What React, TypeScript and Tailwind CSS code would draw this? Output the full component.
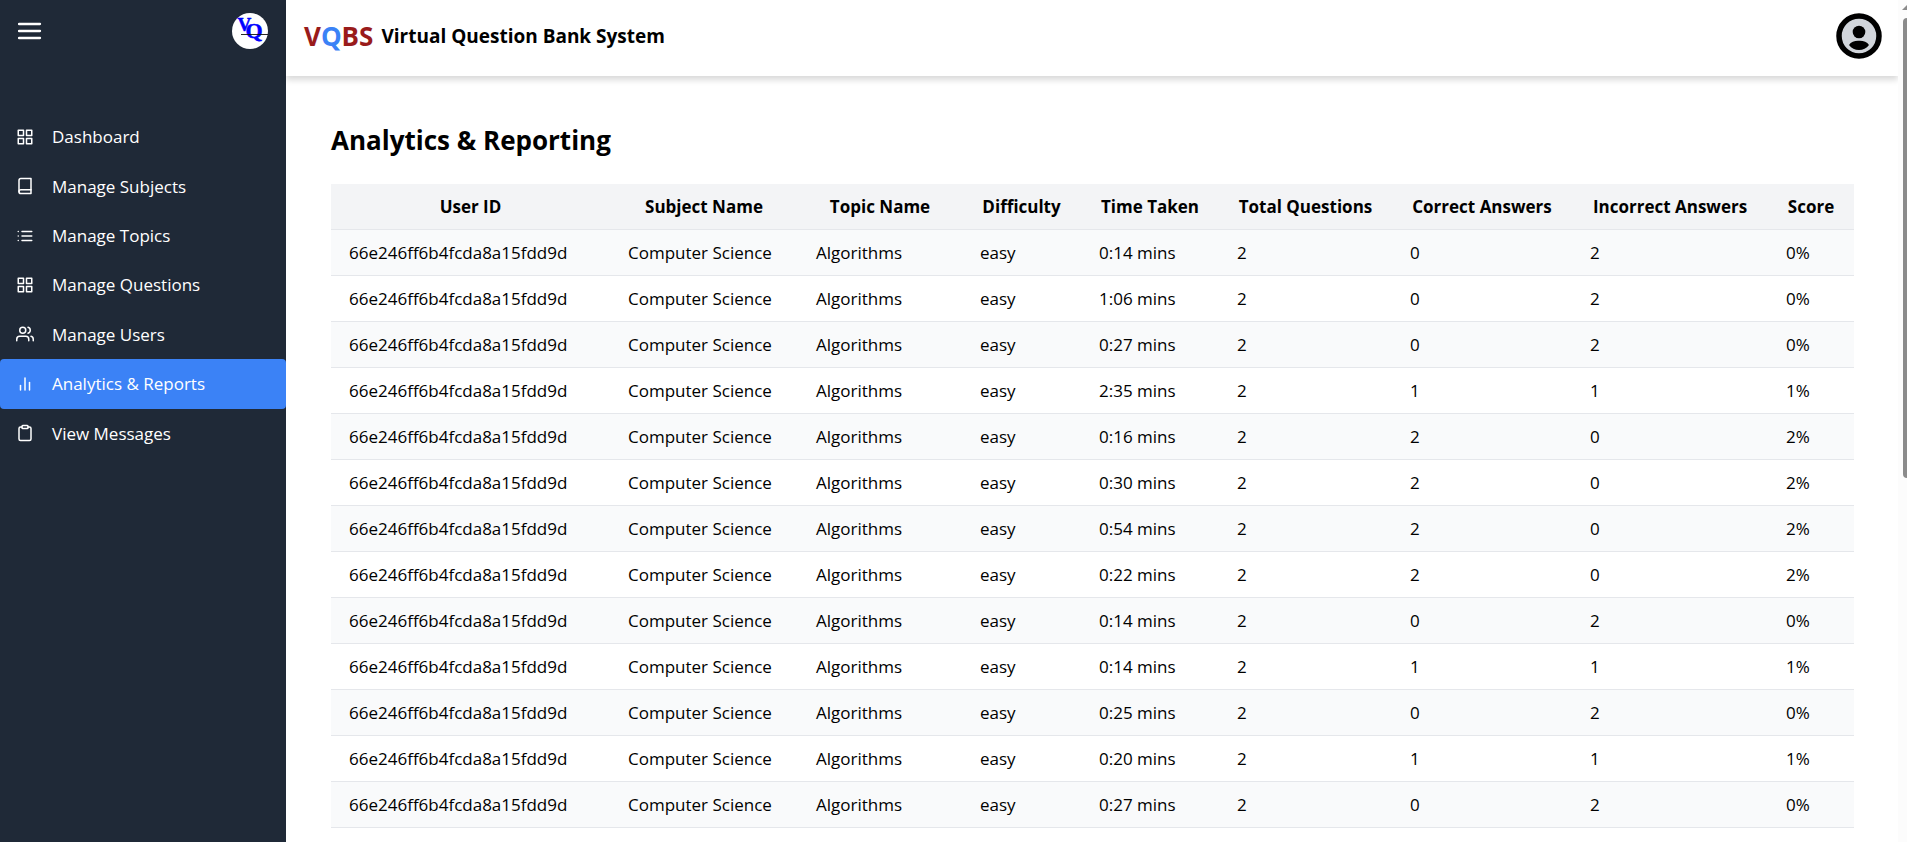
import { useState } from "react";
import type { IconType } from "react-icons";
import {
  FiBarChart2,
  FiBook,
  FiClipboard,
  FiGrid,
  FiList,
  FiUsers,
} from "react-icons/fi";

const navItems: { label: string; icon: IconType }[] = [
  { label: "Dashboard", icon: FiGrid },
  { label: "Manage Subjects", icon: FiBook },
  { label: "Manage Topics", icon: FiList },
  { label: "Manage Questions", icon: FiGrid },
  { label: "Manage Users", icon: FiUsers },
  { label: "Analytics & Reports", icon: FiBarChart2 },
  { label: "View Messages", icon: FiClipboard },
];

const columns = [
  { title: "User ID", width: "w-[279px]" },
  { title: "Subject Name", width: "w-[188px]" },
  { title: "Topic Name", width: "w-[164px]" },
  { title: "Difficulty", width: "w-[119px]" },
  { title: "Time Taken", width: "w-[138px]" },
  { title: "Total Questions", width: "w-[173px]" },
  { title: "Correct Answers", width: "w-[180px]" },
  { title: "Incorrect Answers", width: "w-[196px]" },
  { title: "Score", width: "w-[86px]" },
];

const attempts = [
  { time: "0:14", correct: 0 },
  { time: "1:06", correct: 0 },
  { time: "0:27", correct: 0 },
  { time: "2:35", correct: 1 },
  { time: "0:16", correct: 2 },
  { time: "0:30", correct: 2 },
  { time: "0:54", correct: 2 },
  { time: "0:22", correct: 2 },
  { time: "0:14", correct: 0 },
  { time: "0:14", correct: 1 },
  { time: "0:25", correct: 0 },
  { time: "0:20", correct: 1 },
  { time: "0:27", correct: 0 },
];

function Logo() {
  return (
    <svg viewBox="0 0 36 36" className="size-9" role="img" aria-label="VQ logo">
      <circle cx="18" cy="18" r="18" fill="#fff" />
      <g
        fill="#0000ff"
        stroke="#0000ff"
        strokeWidth="0.5"
        fontFamily="Liberation Serif, serif"
        fontWeight="700"
      >
        <text x="5.5" y="18" fontSize="19">V</text>
        <text x="13.5" y="25" fontSize="22">Q</text>
      </g>
      <path d="M9 21.5H36" stroke="#111" strokeWidth="0.9" />
    </svg>
  );
}

function Sidebar() {
  const [active, setActive] = useState("Analytics & Reports");
  return (
    <aside className="flex w-[286px] shrink-0 flex-col bg-[#1f2937] text-white">
      <div className="flex h-[112px] items-start justify-between pt-[13px] pr-[18px] pl-[18px]">
        <button type="button" aria-label="Toggle menu" className="flex h-9 items-center">
          <svg viewBox="0 0 24 18" className="h-[18px] w-6" fill="none" stroke="currentColor" strokeWidth="2.3" strokeLinecap="round">
            <path d="M1 2H22M1 9H22M1 16H22" />
          </svg>
        </button>
        <Logo />
      </div>
      <nav className="grid h-[346px] grid-cols-1 grid-rows-7">
        {navItems.map(({ label, icon: Icon }) => (
          <a
            key={label}
            href="#"
            onClick={() => setActive(label)}
            className={
              label === active
                ? "flex items-center gap-[18px] rounded-[4px] bg-[#3b82f6] pl-4"
                : "flex items-center gap-[18px] pl-4"
            }
          >
            <Icon className="size-[18px]" />
            <span>{label}</span>
          </a>
        ))}
      </nav>
    </aside>
  );
}

function Header() {
  return (
    <header className="flex h-[76px] items-center justify-between bg-white pr-4 pb-1 pl-[18px] shadow-[0_4px_6px_rgba(0,0,0,0.15)]">
      <div className="flex items-center gap-2 font-bold">
        <span className="text-[26px] text-[#991b1b]">
          V<span className="text-[#3b82f6]">Q</span>BS
        </span>
        <span className="text-[19px]">Virtual Question Bank System</span>
      </div>
      <button type="button" aria-label="Account">
        <svg viewBox="0 0 46 46" className="size-[46px]">
          <circle cx="23" cy="23" r="20" fill="#d1d5db" stroke="#000" strokeWidth="5.5" />
          <circle cx="23" cy="19" r="6.3" />
          <path d="M13 32c2-3.500 6-4.500 10-4.300 4-.2 8 .8 10 4.300-2.500 3.200-6 5-10 5s-7.500-1.800-10-5Z" />
        </svg>
      </button>
    </header>
  );
}

export default function App() {
  return (
    <div className="flex h-screen overflow-hidden bg-white font-['Open_Sans','Noto_Sans',sans-serif] text-[17px] leading-[27px] text-black">
      <Sidebar />
      <div className="flex min-w-0 flex-1 flex-col">
        <Header />
        <main className="flex-1 overflow-hidden px-[45px] pt-[46px]">
          <h1 className="mb-[26px] text-[26px] leading-9 font-bold">Analytics &amp; Reporting</h1>
          <table className="w-full table-fixed border-collapse">
            <colgroup>
              {columns.map((c) => (
                <col key={c.title} className={c.width} />
              ))}
            </colgroup>
            <thead>
              <tr className="h-[45px] border-b border-[#e5e7eb] bg-[#f3f4f6]">
                {columns.map((c) => (
                  <th key={c.title} scope="col" className="whitespace-nowrap">
                    {c.title}
                  </th>
                ))}
              </tr>
            </thead>
            <tbody>
              {attempts.map(({ time, correct }, i) => (
                <tr key={i} className="h-[46px] border-b border-[#e5e7eb] odd:bg-[#f9fafb]">
                  <td className="pl-[18px]">66e246ff6b4fcda8a15fdd9d</td>
                  <td className="pl-[18px]">Computer Science</td>
                  <td className="pl-[18px]">Algorithms</td>
                  <td className="pl-[18px]">easy</td>
                  <td className="pl-[18px]">{time} mins</td>
                  <td className="pl-[18px]">2</td>
                  <td className="pl-[18px]">{correct}</td>
                  <td className="pl-[18px]">{2 - correct}</td>
                  <td className="pl-[18px]">{correct}%</td>
                </tr>
              ))}
            </tbody>
          </table>
        </main>
      </div>
      <div aria-hidden="true" className="flex w-[9px] shrink-0 flex-col items-end bg-[#fcfcfc] pt-[5px]">
        <svg viewBox="0 0 5 5" className="size-[5px]">
          <path d="M0 5L5 0V5Z" fill="#8b8b8b" />
        </svg>
        <div className="mt-2 h-[55%] w-1 rounded-l-[4px] bg-[#8b8b8b]" />
      </div>
    </div>
  );
}
